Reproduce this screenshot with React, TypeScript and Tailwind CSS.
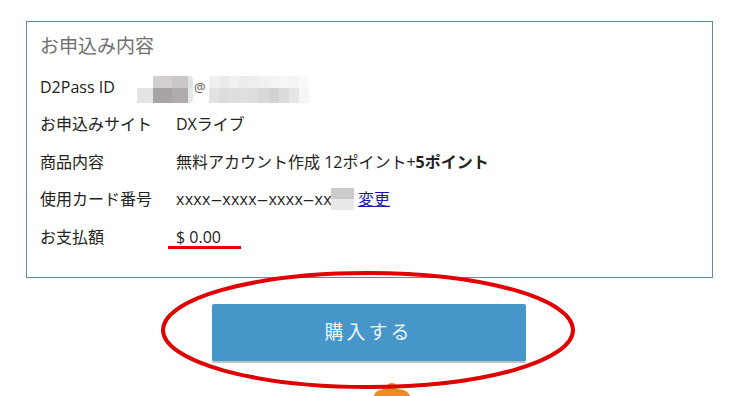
const font = { fontFamily: '"Open Sans", "Noto Sans CJK JP", sans-serif' }

// pixelated blur over the masked mail address
const mailTop = ['#f0f0f0', '#ebebeb', '#f2f2f2', '#ededed', '#eeeeee', '#f1f1f1', '#f3f3f3', '#f6f6f6', '#f5f5f5', '#fafafa']
const mailBottom = ['#e2e2e2', '#dcdcdc', '#dedede', '#e0e0e0', '#dddddd', '#d8d8d8', '#d2d2d2', '#dcdcdc', '#e6e6e6', '#f6f6f6']

function Masked() {
  return (
    <span className="inline-flex items-center h-[27px]">
      <span className="flex flex-col">
        <span className="flex h-[12px]">
          <span className="w-[16px] bg-white" />
          <span className="w-[19px] bg-[#d3cfcf]" />
          <span className="w-[16px] bg-[#cbc7c7]" />
          <span className="w-[5px] bg-[#e2e2e2] rounded-tr-[4px]" />
        </span>
        <span className="flex h-[15px]">
          <span className="w-[16px] bg-[#e4e4e4]" />
          <span className="w-[19px] bg-[#a9a4a4]" />
          <span className="w-[16px] bg-[#b1acac]" />
          <span className="w-[5px] bg-[#e8e8e8] rounded-br-[4px]" />
        </span>
      </span>
      <span className="text-[13px] text-[#555] ml-[1px] mr-[3px] -mt-[5px]">@</span>
      <span className="flex flex-col">
        <span className="flex">
          {mailTop.map((c, i) => (
            <span key={i} className="w-[10px] h-[12px]" style={{ background: c }} />
          ))}
        </span>
        <span className="flex">
          {mailBottom.map((c, i) => (
            <span key={i} className="w-[10px] h-[15px]" style={{ background: c }} />
          ))}
        </span>
      </span>
    </span>
  )
}

function Row({ label, children }: { label: string; children: React.ReactNode }) {
  return (
    <div className="flex items-center h-[37.5px]">
      <div className="w-[136px] shrink-0">{label}</div>
      <div className="flex items-center">{children}</div>
    </div>
  )
}

const Dash = () => <span className="inline-block w-[11.5px] text-center scale-x-[2.4]">-</span>

export default function App() {
  return (
    <div className="relative w-[737px] h-[396px] bg-white overflow-hidden text-[16px] text-[#222]" style={font}>
      <div className="pt-[21px] pl-[26px]">
        {/* Order summary */}
        <div className="w-[687px] h-[257px] border border-[#5b8c99] px-[13px] pt-[11px]">
          <div className="text-[19px] leading-[26px] text-[#6f6f6f]">お申込み内容</div>
          <div className="mt-[9px]">
            <Row label="D2Pass ID">
              <span className="-ml-[39px]">
                <Masked />
              </span>
            </Row>
            <Row label="お申込みサイト">DXライブ</Row>
            <Row label="商品内容">
              <span>
                無料アカウント作成 12ポイント+<b className="font-bold">5ポイント</b>
              </span>
            </Row>
            <Row label="使用カード番号">
              <span className="tracking-[0.3px]">
                xxxx<Dash />xxxx<Dash />xxxx<Dash />xx
              </span>
              <span className="flex flex-col -ml-[1px]">
                <span className="w-[23px] h-[11px] bg-[#cbcbcb]" />
                <span className="w-[23px] h-[11px] bg-[#e8e8e8]" />
              </span>
              <a href="#" className="ml-[4px] text-[#1a1aa6] underline">変更</a>
            </Row>
            <Row label="お支払額">
              <span className="relative leading-[20px]">
                $ 0.00
                <span className="absolute left-[-8px] top-[19px] w-[73px] h-[3px] bg-[#e00000]" />
              </span>
            </Row>
          </div>
        </div>
      </div>

      {/* Purchase button */}
      <div className="flex justify-center mt-[26px]">
        <button className="w-[314px] h-[57px] rounded-[2px] bg-[#4796c9] text-[#eef5fb] text-[19px] tracking-[3px] shadow-[0_2px_0_#b9c3ca]">
          購入する
        </button>
      </div>

      {/* annotation overlays */}
      <svg className="absolute left-0 top-0 pointer-events-none" width="737" height="396">
        <path d="M374 396 C375 391 380 389 386 389 C386 385 389 383 392 383 C395 383 397 385 397 389 C404 389 409 392 410 396 Z" fill="#f28a22" />
        <ellipse cx="368" cy="330" rx="205" ry="57" fill="none" stroke="#e00000" strokeWidth="4" />
      </svg>
    </div>
  )
}
